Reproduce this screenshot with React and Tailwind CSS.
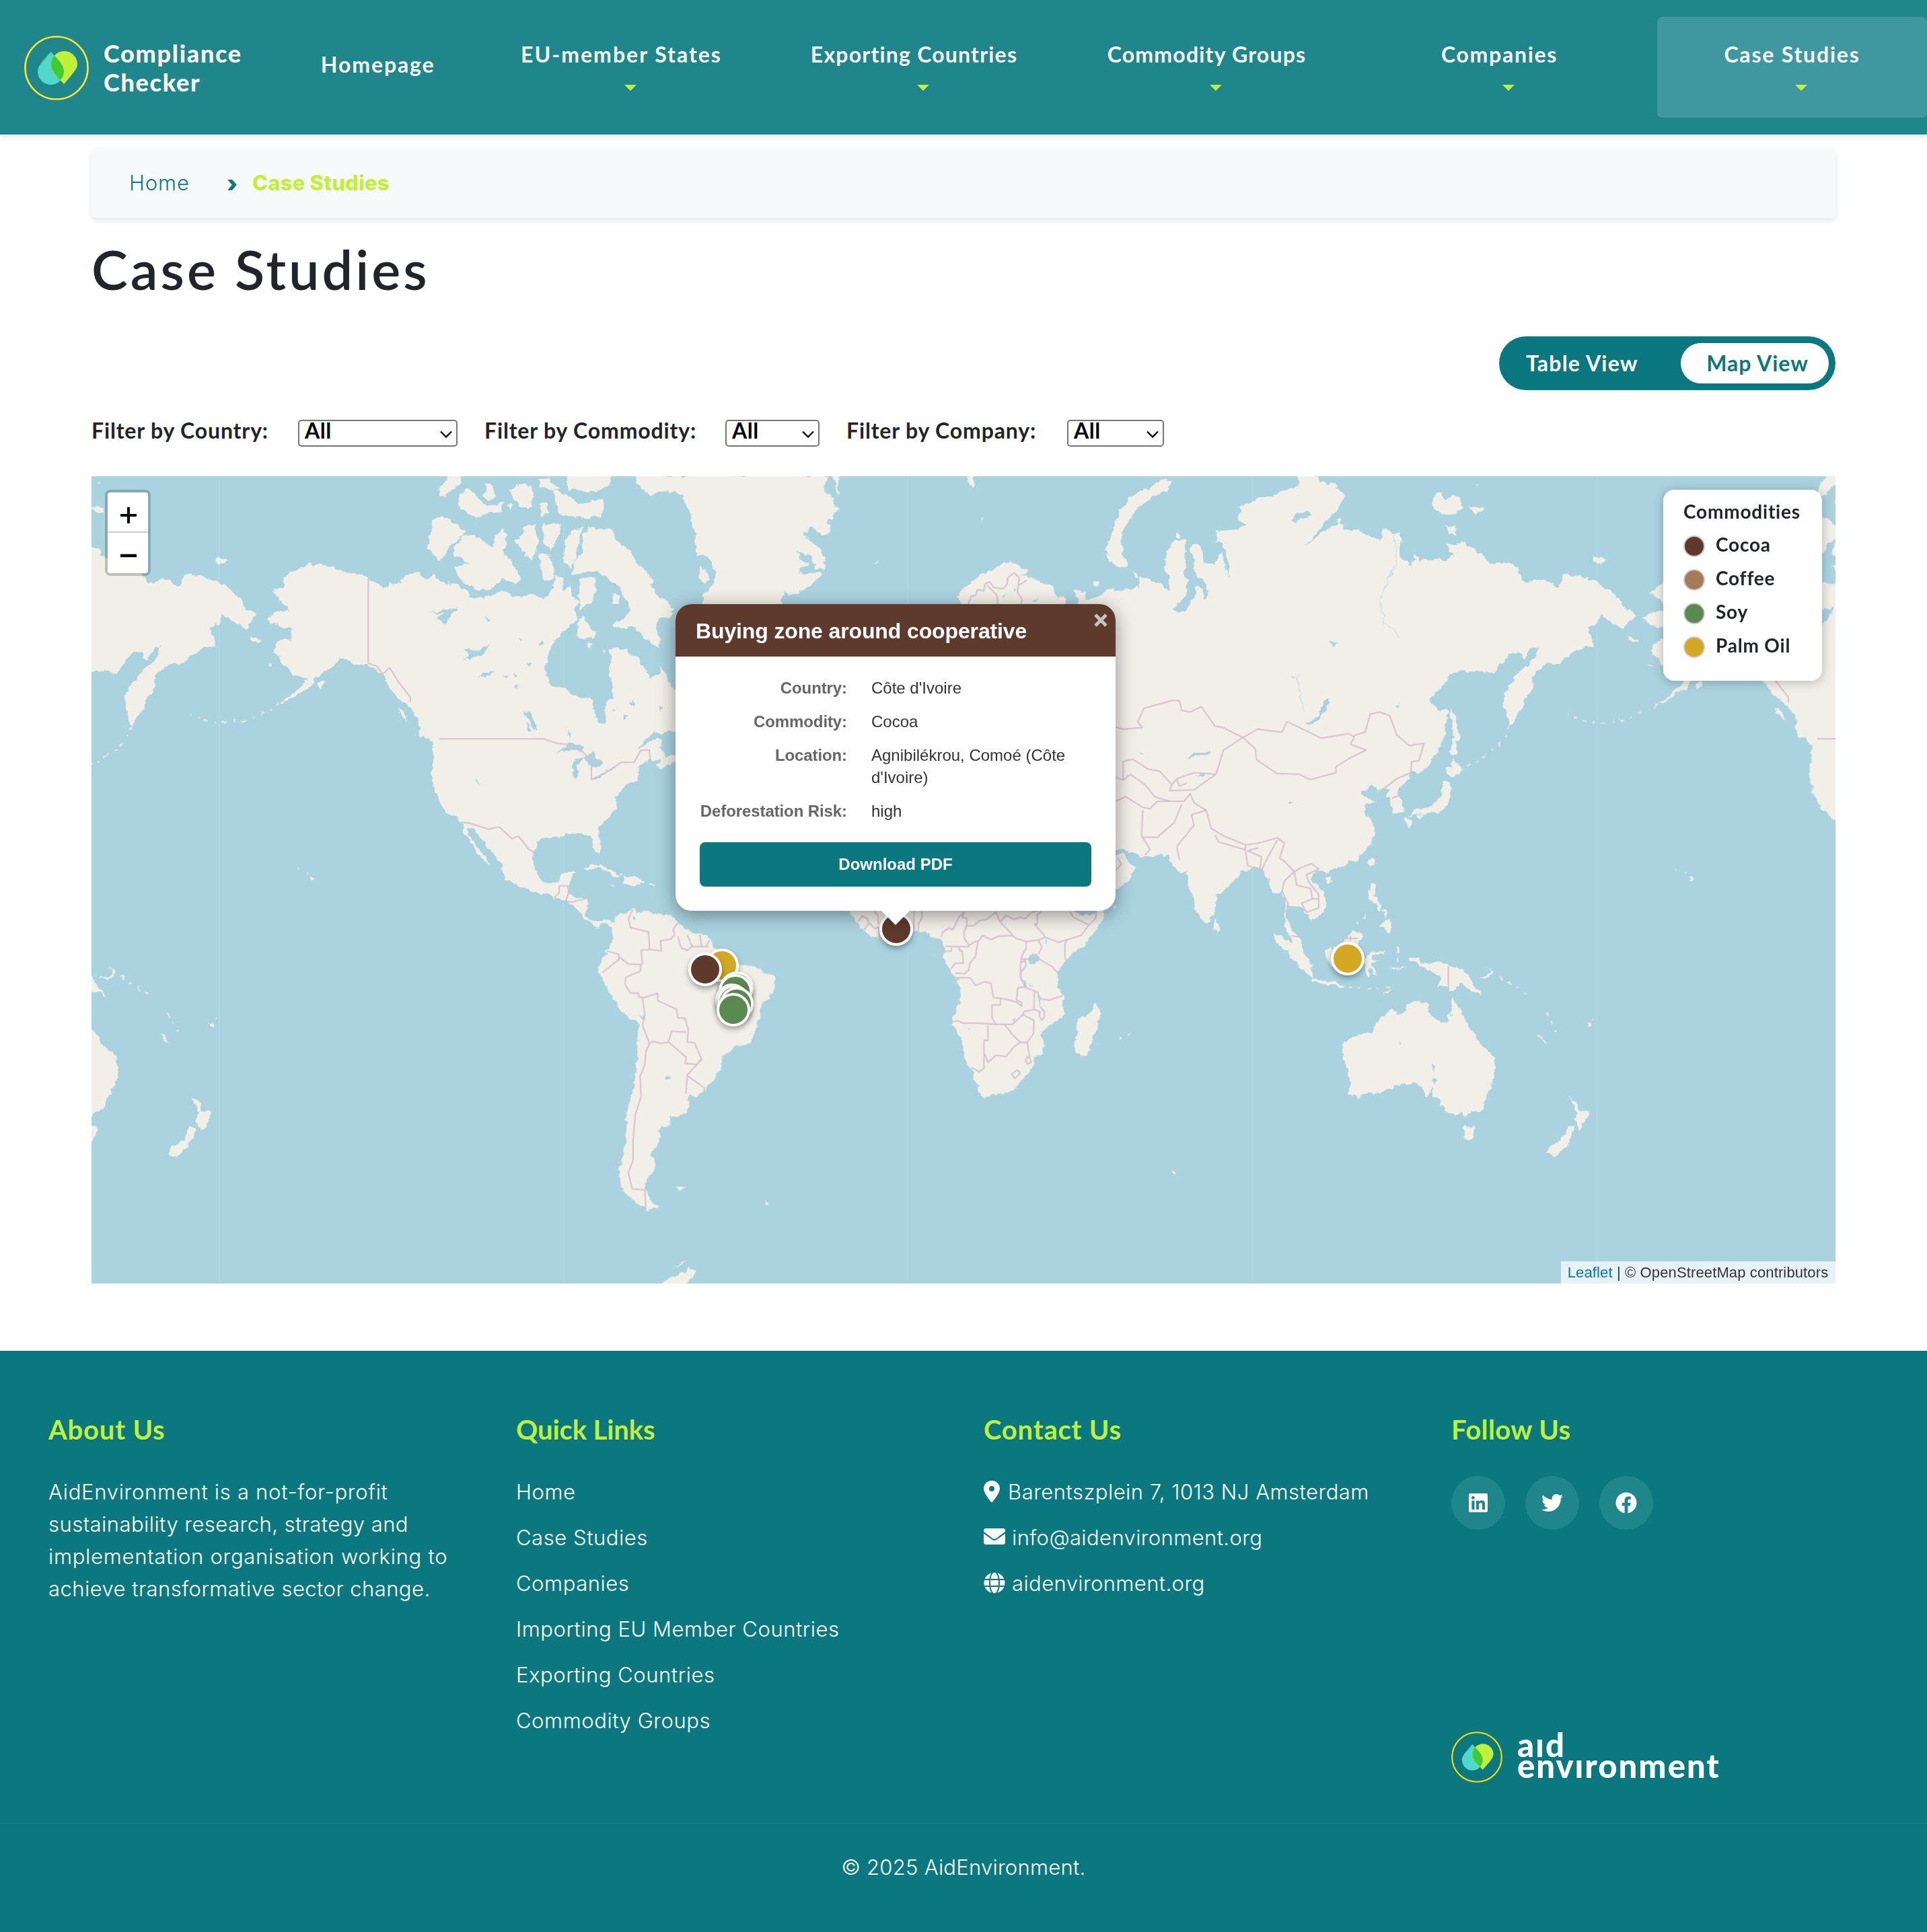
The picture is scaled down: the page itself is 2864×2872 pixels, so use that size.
import React from "react";
import { FaEnvelope, FaGlobe, FaLinkedin, FaTwitter, FaFacebook } from "react-icons/fa";
import { FaLocationDot } from "react-icons/fa6";

const NAV = [
  ["EU-member States", "tracking-[2px]"],
  ["Exporting Countries", "tracking-[1.2px]"],
  ["Commodity Groups", "tracking-[1.2px]"],
  ["Companies", "tracking-[1.7px]"],
  ["Case Studies", "tracking-[1.8px]"],
];
const QUICK_LINKS = [
  "Home",
  "Case Studies",
  "Companies",
  "Importing EU Member Countries",
  "Exporting Countries",
  "Commodity Groups",
];
const LEGEND = [
  ["Cocoa", "#5d3a2b"],
  ["Coffee", "#a67b5b"],
  ["Soy", "#5a8a50"],
  ["Palm Oil", "#d4a823"],
];
const MARKERS = [
  [1332, 1381, "#5d3a2b"],
  [2003, 1425, "#d4a823"],
  [1072.5, 1434.5, "#d4a823"],
  [1048.3, 1440.5, "#5d3a2b"],
  [1095, 1469, "#5a8a50"],
  [1092.5, 1473, "#5a8a50"],
  [1088, 1487, "#5a8a50"],
  [1091, 1489, "#5a8a50"],
  [1094.5, 1491.5, "#5a8a50"],
  [1090.3, 1501, "#5a8a50"],
];
const ROWS = [
  ["Country:", "Côte d'Ivoire"],
  ["Commodity:", "Cocoa"],
  ["Location:", "Agnibilékrou, Comoé (Côte d'Ivoire)"],
  ["Deforestation Risk:", "high"],
];

/* Each sheet of the map has its own drawing scale; t places it on the world canvas. */
const NORTH_AMERICA = {
  t: "translate(120 600) scale(0.63776 0.5102)",
  land: [
    "M532,458 545,470 565,466 590,480 610,488 640,497 655,495 670,510 690,525 708,537 720,522 740,530 750,508 770,495 788,485 795,503 805,510 822,495 830,512 850,520 880,530 900,545 905,565 935,566 960,556 985,543 1010,560 1035,562 1055,552 1075,568 1090,560 1100,540 1105,500 1118,510 1128,545 1140,530 1145,560 1160,575 1150,600 1160,625 1140,650 1110,685 1090,715 1083,760 1085,790 1098,822 1125,828 1150,850 1193,865 1197,905 1217,937 1225,925 1220,880 1240,860 1240,820 1228,795 1236,750 1232,712 1255,715 1270,715 1295,735 1310,770 1328,800 1345,790 1352,765 1365,790 1380,830 1395,860 1400,930 1386,955 1335,960 1310,985 1300,1005 1320,990 1345,975 1355,985 1350,1010 1365,1030 1386,1020 1396,1035 1350,1065 1340,1055 1350,1040 1328,1035 1300,1060 1297,1095 1270,1110 1255,1135 1245,1150 1250,1180 1225,1210 1205,1240 1212,1275 1210,1315 1200,1305 1188,1260 1165,1252 1130,1250 1115,1265 1085,1262 1065,1280 1055,1310 1058,1355 1072,1390 1090,1398 1115,1395 1120,1370 1150,1363 1142,1395 1137,1420 1150,1438 1183,1440 1180,1475 1175,1490 1190,1510 1215,1506 1232,1503 1240,1518 1225,1515 1205,1525 1190,1518 1170,1497 1160,1475 1145,1460 1130,1450 1103,1440 1090,1430 1060,1425 1020,1405 990,1385 985,1355 960,1310 940,1280 915,1240 903,1232 905,1255 925,1295 945,1325 950,1345 935,1325 918,1300 905,1270 893,1245 885,1220 868,1202 850,1190 835,1155 822,1120 818,1080 822,1020 820,985 795,955 785,940 790,925 770,890 745,865 720,830 705,795 690,775 668,758 640,762 620,750 605,742 588,765 565,785 545,800 530,830 500,850 480,868 465,872 500,840 522,815 527,800 495,795 485,775 470,760 465,740 447,725 455,700 475,685 490,690 492,655 470,655 445,640 432,628 445,612 465,600 485,605 470,575 445,548 470,535 480,500 500,485 520,475Z",
    "M1205,365 1240,370 1250,400 1275,425 1300,470 1325,500 1330,535 1350,565 1378,600 1375,630 1355,620 1340,640 1350,690 1350,710 1320,690 1290,650 1265,655 1240,650 1260,630 1285,600 1270,570 1255,535 1225,505 1200,490 1165,490 1145,500 1150,460 1170,440 1168,410 1170,380 1185,362Z",
    "M1145,370 1170,360 1160,400 1155,450 1140,480 1125,450 1130,400Z",
    "M870,415 890,385 915,380 935,400 960,420 965,390 985,362 995,380 985,430 1005,460 1025,510 1015,530 985,510 960,540 925,545 890,520 870,475 905,465 870,440Z",
    "M818,338 845,330 870,345 898,375 880,395 860,410 850,435 835,460 820,435 808,425 815,380Z",
    "M880,280 900,245 920,260 935,290 950,300 985,285 980,310 945,318 920,335 900,315 880,300Z",
    "M862,205 890,205 885,235 860,250 850,270 835,268 840,240Z",
    "M945,230 958,235 970,270 955,285 940,275Z",
    "M1000,250 1025,232 1050,240 1055,275 1045,310 1025,300 1010,280Z",
    "M1070,290 1088,290 1090,320 1075,325ZM993,290 1002,290 1000,308Z",
    "M1100,250 1130,265 1160,290 1215,278 1220,300 1215,330 1150,330 1115,322 1105,290Z",
    "M1130,205 1235,205 1230,240 1200,258 1160,250 1135,245Z",
    "M1065,220 1090,220 1115,250 1070,245Z",
    "M1012,400 1035,365 1060,350 1065,400 1062,430 1050,455 1030,430Z",
    "M1080,350 1120,350 1115,380 1095,430 1075,400Z",
    "M1070,440 1090,440 1105,490 1100,510 1080,515 1068,480Z",
    "M1165,510 1198,508 1200,545 1185,580 1165,605 1160,570Z",
    "M1158,635 1168,615 1185,650 1205,665 1195,685 1155,680Z",
    "M1240,555 1258,560 1250,582 1240,580ZM1178,700 1195,695 1188,712ZM1212,716 1222,722 1216,735Z",
    "M395,680 415,685 420,694 400,692Z",
    "M785,945 800,950 830,985 832,1005 820,990 790,965Z",
    "M740,885 752,895 760,925 745,905Z",
    "M550,815 565,808 568,820 555,832Z",
    "M436,762 448,760 450,768Z",
    "M1172,1355 1195,1342 1220,1350 1262,1375 1240,1378 1225,1362 1205,1352 1180,1358Z",
    "M1265,1382 1290,1382 1317,1395 1300,1400 1285,1405 1262,1395Z",
    "M1230,1398 1247,1400 1240,1404ZM1325,1397 1340,1398 1338,1403 1326,1402Z",
    "M536,1378 547,1386 538,1393ZM502,1353 508,1353 508,1358ZM524,1364 532,1367 526,1370Z",
  ],
  isles: "M500,845 450,888 400,918 340,932 290,925 255,905",
  water: [
    "M1108,1016 1145,985 1172,1000 1165,1015 1140,1010Z",
    "M1150,1035 1172,1028 1160,1050 1155,1095 1145,1085Z",
    "M1170,1030 1190,1018 1215,1045 1200,1062 1180,1045Z",
    "M1188,1098 1220,1075 1222,1082 1192,1100ZM1222,1068 1245,1058 1245,1064 1224,1070Z",
    "M1030,895 1045,895 1067,955 1058,952 1040,912ZM1036,930 1042,930 1052,955 1046,955Z",
    "M890,747 905,735 895,712 925,720 955,702 940,725 905,747Z",
    "M812,605 840,605 875,592 868,612 860,622 848,645 832,625 845,612Z",
    "M925,800 940,785 968,778 945,795ZM920,1096 930,1104 926,1109Z",
    "M1020,688 1030,686 1024,696ZM1070,690 1078,700 1070,702ZM985,790 998,788 992,800ZM1040,755 1052,755 1046,765Z",
    "M1010,820 1022,815 1014,835ZM1005,790 1015,795 1008,803ZM945,620 955,625 948,635ZM1345,882 1360,882 1352,895Z",
    "M1280,870 1290,865 1285,880ZM1265,905 1275,910 1268,920ZM1240,890 1248,893 1242,902ZM1135,955 1143,958 1138,972Z",
  ],
  borders:
    "M670,510V757L690,765 703,788 720,770 740,810 768,855 768,870M835,977H1080L1110,990 1135,993 1170,1015 1190,1040 1190,1095 1220,1078 1260,1045 1290,1045 1305,1010 1325,1010 1327,1040M885,1220 905,1222 950,1240 975,1233 1005,1268 1020,1260 1045,1300 1060,1307M1103,1440 1115,1425 1115,1405 1135,1405 1137,1425 1130,1450 1145,1452 1183,1440",
};

const ARCTIC = {
  t: "translate(900 700) scale(0.5102 0.33333)",
  land: [
    "M85,20 100,60 108,85 135,110 155,92 180,85 205,95 225,125 240,170 250,220 262,290 265,345 265,385 285,370 305,395 318,440 318,500 300,530 285,560 282,620 505,620 515,570 518,530 530,553 560,540 600,505 635,458 600,452 565,460 560,440 595,420 565,390 562,358 600,380 610,435 640,440 635,380 615,330 575,285 600,250 630,285 655,270 655,240 645,225 668,210 665,190 685,175 665,150 662,110 640,90 635,60 650,20Z",
    "M665,20H680L675,110Z",
    "M270,425 300,450 300,490 285,500 272,480Z",
    "M780,415 792,402 788,415ZM1090,208 1097,212 1092,220Z",
    "M1048,20H1075L1070,70 1055,50Z",
    "M0,320 15,315 30,330 50,370 80,380 85,420 110,430 125,460 135,500 120,520 145,560 180,575 200,620 190,640H100L75,560 60,520 30,470 0,430Z",
    "M0,262 20,270 30,310 0,310ZM0,40 14,45 8,75 0,78ZM22,550 42,548 38,590 22,590Z",
    "M1025,560 1045,520 1060,505 1095,460 1130,435 1165,405 1195,410 1225,445 1215,465 1245,475 1275,500 1300,520 1320,555 1340,575 1340,620H1040Z",
    "M1365,530 1398,535 1395,560 1400,570 1385,595 1380,620H1370L1380,570Z",
    "M1415,580 1440,560 1465,525 1480,520 1480,545 1510,545 1545,520 1600,515V640H1420Z",
    "M1420,490 1440,490 1435,520 1418,515Z",
  ],
  water: ["M1155,555 1165,550 1160,565ZM1190,525 1196,530 1190,540ZM1240,575 1258,570 1248,582Z"],
  borders:
    "M1055,600 1065,560 1078,555 1083,530 1102,535 1105,505 1118,495 1132,520 1158,525 1170,505 1172,475 1190,455 1205,475 1200,540 1213,572 1210,600M1112,510 1140,555 1143,600M1203,510 1228,487",
};

const ASIA = {
  t: "translate(1600 700) scale(0.72704 0.44643)",
  land: [
    "M-50,480 20,430 60,405 90,400 105,390 115,400 130,398 128,350 160,365 185,395 192,408 190,345 178,330 185,270 200,230 222,235 225,300 220,340 228,365 220,420 195,460 220,472 240,420 245,385 258,395 262,430 270,410 265,380 260,360 240,340 240,290 230,260 245,240 255,260 260,300 280,315 295,270 310,350 310,310 305,265 285,235 288,200 330,195 345,180 330,155 335,120 370,95 400,80 430,65 455,45 450,10 490,10 495,40 530,45 545,80 540,120 515,155 500,190 465,250 495,215 520,185 545,175 550,195 580,200 600,215 625,235 625,195 650,205 660,205 665,240 660,280 683,318 693,275 700,300 735,290 750,300 770,285 755,245 790,240 815,260 825,275 845,310 880,305 905,325 908,350 920,375 955,360 985,385 995,345 1030,350 1060,365 1090,400 1110,430 1120,460 1142,475 1130,500 1120,530 1090,500 1070,475 1065,510 1045,520 1058,585 1040,580 1010,610 985,645 965,640 945,660 930,690 935,720 920,750 905,800 885,850 873,790 875,740 900,680 935,625 945,585 930,590 915,630 905,605 885,610 865,650 855,675 830,665 770,670 750,710 720,765 735,790 760,800 755,870 740,930 720,985 700,1008 685,1000 680,1030 660,1055 655,1075 665,1100 668,1130 645,1145 642,1090 632,1085 640,1060 625,1060 615,1070 605,1045 580,1075 590,1085 613,1100 590,1115 595,1150 610,1185 605,1230 585,1280 555,1310 525,1325 510,1345 500,1330 485,1340 480,1360 505,1400 510,1440 505,1470 480,1500 475,1475 455,1450 440,1455 432,1440 430,1490 440,1530 456,1550 463,1580 468,1625 455,1612 442,1575 438,1550 425,1520 428,1450 420,1400 400,1408 395,1370 380,1330 365,1320 340,1330 330,1350 310,1385 285,1410 282,1480 262,1508 245,1470 230,1400 225,1330 210,1340 195,1310 190,1280 140,1280 110,1275 95,1255 80,1260 -50,1260Z",
    "M50,1290 95,1275 105,1300 122,1320 110,1360 80,1392 50,1400Z",
    "M282,1490 295,1520 290,1535 280,1530Z",
    "M60,260 75,200 85,140 110,85 150,55 180,28 195,35 190,65 150,90 125,125 105,170 90,230 95,280 105,320 85,320 65,295Z",
    "M112,330 122,340 128,358 118,350ZM33,370 45,365 47,380 36,390ZM-5,400 15,402 20,425 8,440Z",
    "M768,785 775,830 783,895 775,900 778,945 765,945 768,880 763,820Z",
    "M768,960 790,985 790,1000 775,1020 762,1015 755,990 767,985Z",
    "M750,1030 762,1035 765,1075 755,1115 745,1135 720,1140 695,1145 680,1150 690,1130 715,1125 730,1105 745,1080Z",
    "M675,1155 688,1165 680,1192 672,1175ZM695,1148 710,1145 705,1160Z",
    "M600,1285 610,1290 605,1320 596,1305ZM507,1355 520,1350 522,1365 512,1375Z",
    "M600,1375 612,1378 610,1415 622,1445 600,1430 595,1405Z",
    "M730,80 745,70 752,100 765,78 785,95 790,120 770,145 750,145 730,130Z",
    "M800,115 830,125 830,140 815,145ZM755,180 775,190 775,215 760,205Z",
    "M1055,295 1070,288 1083,298 1065,312ZM1128,552 1150,562 1140,570Z",
    "M530,160 542,160 538,180ZM205,205 212,205 212,222 206,222ZM815,42 824,42 820,48Z",
  ],
  isles: "M885,850 870,905 840,940 820,965 793,985",
  water: [
    "M512,752 517,775 500,815 475,848 468,840 495,815Z",
    "M230,965 235,938 275,936 270,945 240,948Z",
    "M435,1102 443,1102 440,1112ZM240,1012 268,1010 262,1020ZM127,940 135,940 132,948Z",
    "M445,150 470,130 480,150 460,155 448,180 440,165Z",
    "M515,565 535,572 525,585ZM655,780 663,775 657,792Z",
  ],
  borders:
    "M80,853 95,860 135,855 125,835 138,790 195,765 210,765 215,798 232,803 255,785 283,850 300,855 340,888 300,930 290,985 285,1010 240,1005 205,1025 195,1045 170,1000 145,992 115,960 95,968 95,1030M340,888 370,860 420,870 430,835 450,850 500,890 555,875 568,885 560,910 592,930 560,955 530,985 530,1005 478,1028 455,1010 410,1008 368,962 365,925 340,888M568,880 590,870 600,810 620,803 640,815 655,880 680,915 710,907 700,965 685,968 683,1005 655,1025 628,1058M645,1090 660,1080M80,1020 95,1030 110,1010 140,1045 160,1085 190,1100M195,1045 190,1065 240,1062 285,1010M205,1025 210,1050 225,1040M80,1100 100,1085 135,1120 150,1125 165,1100 195,1100 220,1100 232,1075 240,1105 265,1130 275,1190 300,1215 345,1245 370,1240 410,1222 425,1240 415,1290M135,1130 133,1215 150,1260 140,1280M133,1220 165,1220 200,1170 215,1110M265,1130 235,1145 240,1180 205,1250 210,1295M283,1212 290,1235 345,1262 345,1245M345,1262 350,1315 375,1325 378,1285 350,1265 372,1255M378,1330 390,1290 410,1230M415,1290 425,1300 445,1335 425,1365 420,1400 432,1440 428,1490M445,1335 450,1380 478,1390 482,1425 460,1440 470,1470 495,1455 495,1425 482,1425M445,1335 460,1320 480,1308 495,1325 470,1345 475,1370 495,1410 495,1425M440,1548 455,1552M80,1330 92,1310 85,1290",
  rivers: "M650,205 652,310 635,370 620,430 628,500 645,525 660,555M450,690 458,740 465,800M440,690 455,680",
};

const OCEANIA = {
  t: "translate(1600 1300) scale(0.72704 0.39541)",
  land: [
    "M770,458 778,490 790,520 798,570 815,600 825,640 850,670 857,730 850,790 838,830 828,888 812,888 798,910 788,895 778,905 752,890 745,855 730,830 728,805 715,835 708,800 685,783 650,795 625,820 595,822 575,843 557,828 560,780 548,700 545,640 560,610 605,590 618,545 645,505 655,525 670,520 675,490 695,475 725,485 715,520 735,545 755,562 765,520Z",
    "M788,948 815,950 812,985 802,1000 792,980Z",
    "M1008,832 1022,860 1030,885 1050,890 1040,925 1028,962 1022,930 1015,920 1025,900Z",
    "M1005,945 1018,955 1008,1005 995,1030 980,1062 960,1050 965,1030 990,1000Z",
    "M680,312 700,310 705,340 735,325 775,345 800,375 810,410 833,457 805,435 785,405 775,430 760,435 755,415 735,425 745,400 740,375 715,355 700,350 700,335 680,320Z",
    "M818,388 840,378 848,362 838,345 852,365 842,388Z",
    "M400,222 425,240 450,275 465,300 483,340 484,385 465,370 450,340 430,290 405,245Z",
    "M484,390 515,398 550,415 548,425 510,412 484,402ZM622,455 648,430 640,445Z",
    "M510,280 535,275 545,250 565,210 585,225 575,250 578,290 560,350 540,360 520,340 510,310Z",
    "M590,320 600,292 628,292 634,282 630,300 604,302 600,318 614,322 602,335 618,380 606,372 598,348 596,385 590,380Z",
    "M655,270 660,270 660,300 655,300ZM645,350 675,350 675,355 645,355Z",
    "M618,185 640,165 645,200 636,220 628,200ZM612,105 622,110 622,135 614,128ZM625,130 634,140 630,165Z",
    "M940,600 945,602 962,630 958,630ZM1043,558 1052,558 1050,572 1044,570ZM1055,545 1062,540 1060,550Z",
    "M195,1110 208,1118 198,1130ZM88,610 94,612 90,620ZM1252,10 1260,18 1255,22Z",
  ],
  isles: "M555,428 600,428 650,425M865,385 895,420 925,458M590,150 572,188M960,520 972,560 980,592M655,310 658,330",
  water: ["M726,718 733,722 730,745ZM727,760 734,765 732,790ZM660,630 666,635 661,640Z"],
  borders: "M760,345V435M545,240H575M560,230V250",
};

const AFRICA = {
  t: "translate(1250 1340) scale(0.33333)",
  land: [
    "M30,35 50,65 75,90 85,115 105,125 130,150 165,165 180,160 220,140 300,132 380,132 400,165 445,162 455,180 465,205 450,255 475,290 495,310 515,345 525,380 535,430 530,455 510,480 498,520 500,550 520,585 545,630 550,690 560,730 580,745 595,780 610,820 610,850 635,875 680,860 720,858 760,848 800,815 830,770 855,740 860,710 858,695 900,675 905,640 890,590 930,550 985,515 995,490 988,420 970,380 968,340 975,300 1000,270 1050,220 1100,180 1130,140 1160,90 1170,42 1165,-40 0,-40Z",
    "M1140,450 1150,475 1160,505 1150,520 1140,560 1120,620 1100,680 1070,690 1045,675 1040,620 1060,590 1050,540 1060,520 1090,512 1115,490 1130,470Z",
    "M1210,22 1225,22 1222,30 1212,30ZM1240,608 1250,608 1246,616ZM1278,592 1286,590 1282,600ZM405,235 413,235 410,242Z",
  ],
  water: [
    "M1038,35 1138,35 1130,48 1060,62 1045,50Z",
    "M840,240 880,235 880,265 865,285 840,280Z",
    "M797,290 803,340 830,388 815,382 800,345Z",
    "M876,405 890,425 892,465 898,487 885,460Z",
    "M765,545 775,532 790,525 778,538ZM568,565 582,562 580,570ZM838,368 856,378 850,384ZM908,160 920,190 912,188Z",
  ],
  borders:
    "M75,90 95,65 115,75 125,95 105,125M125,95 150,120 170,115 170,165M150,42 165,65 165,100M325,132V42M345,132V100L360,75V42M445,160 455,135 480,120 500,125 525,70 550,45M550,45 540,70 560,75 560,110 548,135 550,165 570,195 600,178H612M560,110 590,108 620,85 650,80 690,48 710,92 765,150M710,92 735,62 770,80 800,70 820,78 850,48 875,42M612,178 630,152 670,170 700,155 765,152 780,165 825,178 880,172 910,160M895,42 875,60 875,100 862,100 905,150 910,160 970,182 1010,170 1070,152 1105,105 1135,75 1138,42M1020,45 1035,70 1105,105M1010,170 998,190V250L1008,268M880,172 895,205 880,235M805,258 880,255 940,290 968,320M825,178V210L805,245 800,290 803,345 828,385 875,405 890,435 930,440 988,420M465,200 570,202 572,190M462,222H492V202M525,205 530,220 540,222 545,275 510,275 490,300M610,178 600,245 575,275 570,305 550,322 510,320M512,340H575L600,375 640,358 668,365 680,430 710,432 750,440 785,450 805,468V450L782,440 788,385 825,380M710,432V462H673V520L690,548M500,535 520,532 545,543H610L690,548H765L810,505 860,530 858,590 830,628H800L765,595 730,550M810,505 815,492 860,482 862,400M860,482 885,490V515L897,530 907,515 905,490 890,470M655,552V620H637V745L615,760 582,740M640,680 655,718 690,685 735,692 770,650 800,628M830,628 842,700 848,718 830,725 822,710 830,692 842,700M760,770 785,752 800,765 775,790ZM800,275 820,262 825,285 800,320",
};

const SOUTH_AMERICA = {
  t: "translate(120 1240) scale(0.70153 0.43367)",
  land: [
    "M1075,300 1090,308 1098,318 1103,297 1118,308 1130,300 1140,275 1160,265 1170,255 1178,268 1200,262 1215,275 1240,278 1255,280 1262,300 1280,320 1300,340 1320,345 1335,360 1340,385 1350,400 1395,445 1425,455 1450,475 1468,490 1470,520 1455,560 1438,600 1435,650 1425,690 1415,720 1390,728 1360,760 1357,800 1335,850 1320,885 1305,903 1285,890 1290,930 1280,962 1250,970 1245,1005 1225,1000 1228,1035 1220,1075 1205,1095 1218,1125 1212,1160 1192,1200 1205,1250 1222,1278 1205,1290 1185,1275 1165,1250 1145,1210 1140,1150 1148,1100 1155,1040 1157,950 1170,880 1178,800 1180,720 1183,650 1145,610 1130,570 1110,510 1095,475 1100,440 1115,400 1127,360 1123,318 1110,300 1098,322 1078,305Z",
    "M1258,1210 1282,1206 1270,1222ZM1445,1258 1450,1258 1462,1280 1455,1272Z",
    "M1230,1545 1250,1520 1290,1490 1305,1498 1280,1545ZM1253,1488 1282,1460 1275,1475Z",
  ],
  water: ["M1168,280 1175,280 1175,298 1170,296ZM1240,830 1248,835 1244,845ZM1187,620 1195,628 1190,636Z"],
  borders:
    "M1170,258 1160,290 1165,320 1203,335 1205,395 1187,398 1190,445M1205,395 1230,400 1228,365 1250,360 1258,345 1255,325 1265,305M1265,350 1272,390 1285,398 1295,385 1285,345M1295,385H1330M1312,345 1315,385M1332,362 1325,385M1115,400 1140,412V430L1120,455 1105,475M1140,420 1160,445 1187,447 1185,470 1155,490 1153,515 1165,545H1182V558L1195,560 1222,545V570L1262,600 1265,630H1280L1287,670 1285,712 1300,715 1315,770 1305,790 1280,785 1283,765 1245,712 1230,718 1212,710 1205,718M1245,712 1252,675 1283,678M1190,560 1195,620 1190,655 1205,718 1197,745 1195,790 1185,830 1187,900 1175,960 1170,1050V1120L1160,1160 1168,1215 1195,1220 1197,1280M1317,770 1285,825 1282,890M1287,830 1322,870 1320,885",
};

function Land({ s }) {
  return (
    <g transform={s.t}>
      {s.land.map((d, i) => (
        <path key={i} d={d} fill="#f2efe9" />
      ))}
      {s.isles && (
        <path d={s.isles} fill="none" stroke="#f2efe9" strokeOpacity="0.8" strokeWidth="2.5" strokeDasharray="6 9 3 10" vectorEffect="non-scaling-stroke" />
      )}
      {s.water.map((d, i) => (
        <path key={i} d={d} fill="#aad3df" />
      ))}
      {s.rivers && <path d={s.rivers} fill="none" stroke="#cbe0e3" strokeWidth="1.5" vectorEffect="non-scaling-stroke" />}
    </g>
  );
}

function Borders({ s }) {
  return (
    <g transform={s.t}>
      <path d={s.borders} fill="none" stroke="#d5c0ce" strokeWidth="2" strokeLinejoin="round" vectorEffect="non-scaling-stroke" />
    </g>
  );
}

function WorldMap() {
  return (
    <svg viewBox="136 708 2592 1200" className="block h-[1200px] w-[2592px]">
      <defs>
        <filter id="coast" filterUnits="userSpaceOnUse" x="136" y="708" width="2592" height="1200">
          <feTurbulence type="fractalNoise" baseFrequency="0.09" numOctaves="3" seed="4" result="n" />
          <feDisplacementMap in="SourceGraphic" in2="n" scale="10" xChannelSelector="R" yChannelSelector="G" />
        </filter>
        <g id="west">
          <Land s={NORTH_AMERICA} />
        </g>
        <g id="east">
          <Land s={ASIA} />
          <Land s={OCEANIA} />
        </g>
      </defs>
      <rect x="136" y="708" width="2592" height="1200" fill="#aad3df" />
      <g filter="url(#coast)">
        <use href="#west" />
        <use href="#west" x="2048" />
        <Land s={ARCTIC} />
        <Land s={SOUTH_AMERICA} />
        <Land s={AFRICA} />
        <use href="#east" />
        <use href="#east" x="-2048" />
      </g>
      <g id="lines-west">
        <Borders s={NORTH_AMERICA} />
      </g>
      <use href="#lines-west" x="2048" />
      <Borders s={ARCTIC} />
      <Borders s={SOUTH_AMERICA} />
      <Borders s={AFRICA} />
      <Borders s={ASIA} />
      <Borders s={OCEANIA} />
      <path
        d="M325.5,708V1908M837.5,708V1908M1349.5,708V1908M1861.5,708V1908M2373.5,708V1908"
        stroke="#ffffff"
        strokeOpacity="0.14"
        strokeWidth="1"
      />
    </svg>
  );
}

function Emblem({ className, ring, width }) {
  return (
    <svg viewBox="0 0 96 96" className={className}>
      <circle cx="48" cy="48" r="46.5" fill="none" stroke={ring} strokeWidth={width} />
      <path d="M39.5,24 L31,34 C24,42 20,47 20,53.5 A19.5,19.5 0 0 0 59,53.5 C59,47 56,42 49,34 Z" fill="#4fd8cb" />
      <path d="M59,72 L67.500,62 C75,53 79,48 79,42.500 A19.5,19.5 0 0 0 40,42.500 C40,49 43,54 49,61 Z" fill="#c0f03c" />
      <path d="M45.200,29.500 C41.800,33 40,37.500 40,42.500 C40,49 43,54 49,61 L53.600,66.200 C57.200,62.500 59,58 59,53.500 C59,47 56,42 49,34 Z" fill="#3fcb33" />
    </svg>
  );
}

function Select({ className }) {
  return (
    <div className={`flex h-[40px] items-center justify-between rounded-[5px] border-2 border-[#767676] bg-white pr-[5px] pl-[8px] ${className}`}>
      <span className="-mt-[9px] font-['Lato'] text-[32px] leading-[36px] font-bold tracking-[0.6px] text-black">All</span>
      <svg viewBox="0 0 20 12" className="mt-[3px] h-[12px] w-[20px]">
        <path d="M2 1.500 L10 9.500 L18 1.500" fill="none" stroke="#000" strokeWidth="2.300" />
      </svg>
    </div>
  );
}

function Popup() {
  return (
    <div className="absolute top-[190px] left-[868px] w-[654px]">
      <div className="relative h-[456px] overflow-hidden rounded-[24px] bg-white font-['Liberation_Sans'] shadow-[0_6px_28px_rgba(0,0,0,0.4)]">
        <div className="flex h-[78px] items-center bg-[#5d3a2b] pt-[2px] pl-[30px] text-[32px] leading-[40px] font-bold tracking-[-0.13px] text-white">
          Buying zone around cooperative
        </div>
        <svg viewBox="0 0 20 20" className="absolute top-[14px] right-[12px] h-[20px] w-[20px]">
          <path d="M2 2 L18 18 M18 2 L2 18" stroke="#c9c4c1" strokeWidth="5" />
        </svg>
        <div className="flex flex-col gap-[17px] px-[36px] pt-[30px] text-[24px] leading-[33px]">
          {ROWS.map(([k, v]) => (
            <div key={k} className="flex gap-[36px]">
              <div className="w-[219px] text-right font-bold tracking-[-0.1px] whitespace-nowrap text-[#666]">{k}</div>
              <div className="w-[310px] text-[#333]">{v}</div>
            </div>
          ))}
        </div>
        <div className="mx-[36px] mt-[30px] flex h-[66px] items-center justify-center rounded-[8px] bg-[#0b7880] text-[24px] font-bold text-white">
          Download PDF
        </div>
      </div>
      <svg viewBox="0 0 42 21" className="relative mx-auto block h-[21px] w-[42px]">
        <path d="M0 0 H42 L21 21 Z" fill="#fff" />
      </svg>
    </div>
  );
}

export default function App() {
  return (
    <div className="h-[2872px] w-[2864px] overflow-hidden bg-white">
      <header className="relative flex h-[200px] bg-[#1f868c] font-['Lato'] text-[#f8f9fa] shadow-[0_4px_8px_rgba(0,0,0,0.1)]">
        <div className="flex w-[401px] pt-[53px] pl-[36px]">
          <Emblem className="h-[96px] w-[96px]" ring="#ffe62e" width="2.6" />
          <div className="mt-[5px] ml-[22px] text-[36px] leading-[43px] font-black tracking-[1.7px]">
            Compliance
            <br />
            Checker
          </div>
        </div>
        <div className="w-[323px] pt-[76px] text-center text-[32px] leading-[40px] font-bold tracking-[1.9px]">Homepage</div>
        <nav className="flex gap-[34px] pt-[25px]">
          {NAV.map(([n, tracking], i) => (
            <div
              key={n}
              className={`flex h-[150px] w-[401px] flex-col items-center rounded-[8px] pt-[36px] text-[32px] leading-[40px] font-bold whitespace-nowrap ${tracking} ${i === 4 ? "bg-[#3f989f]" : ""}`}
            >
              {n}
              <svg viewBox="0 0 18 9" className="mt-[25px] ml-[27px] h-[9px] w-[18px]">
                <path d="M0 0 H18 L9 9 Z" fill="#c0f03c" />
              </svg>
            </div>
          ))}
        </nav>
      </header>

      <main className="px-[136px] pt-[20px] font-['Lato']">
        <div className="flex h-[104px] items-center rounded-[8px] bg-[#f8f9fb] pl-[56px] font-['Inter'] text-[31px] shadow-[0_4px_8px_rgba(0,0,0,0.1)]">
          <span className="w-[145px] font-light tracking-[0.9px] text-[#0b7880]">Home</span>
          <span className="w-[38px] text-[34px] font-black text-[#0b7880]">›</span>
          <span className="font-extrabold tracking-[0.2px] text-[#c0f03c]">Case Studies</span>
        </div>
        <h1 className="mt-[28px] h-[96px] text-[81px] leading-[96px] font-semibold tracking-[4px] text-[#212529]">Case Studies</h1>
        <div className="mt-[52px] flex justify-end">
          <div className="flex h-[80px] w-[500px] items-center justify-between rounded-full bg-[#0b7880] pr-[10px] pl-[40px] text-[32px] font-bold text-white">
            <span className="tracking-[1.2px]">Table View</span>
            <span className="flex h-[60px] w-[220px] items-center justify-center rounded-full bg-white pl-[8px] tracking-[1px] text-[#0b7880]">
              Map View
            </span>
          </div>
        </div>
        <div className="mt-[44px] flex h-[39px] text-[32px] leading-[32px] font-bold tracking-[0.85px] whitespace-nowrap text-[#212529]">
          <span className="w-[307px]">Filter by Country:</span>
          <Select className="w-[237px]" />
          <span className="ml-[40px] w-[358px]">Filter by Commodity:</span>
          <Select className="w-[140px]" />
          <span className="ml-[40px] w-[328px]">Filter by Company:</span>
          <Select className="w-[144px]" />
        </div>

        <section className="relative mt-[45px] h-[1200px] overflow-hidden">
          <WorldMap />
          {MARKERS.map(([x, y, c], i) => (
            <div
              key={i}
              className="absolute h-[50px] w-[50px] rounded-full border-4 border-white shadow-[0_4px_8px_rgba(0,0,0,0.35)]"
              style={{ left: x - 161, top: y - 733, backgroundColor: c }}
            />
          ))}
          <div className="absolute top-[20px] left-[20px] w-[68px] rounded-[8px] border-4 border-black/20 bg-clip-padding">
            <div className="flex h-[60px] items-center justify-center rounded-t-[4px] border-b-2 border-[#ccc] bg-white">
              <svg viewBox="0 0 26 26" className="mt-[9px] ml-[2px] h-[26px] w-[26px]">
                <path d="M13 1V25M1 13H25" stroke="#000" strokeWidth="4" />
              </svg>
            </div>
            <div className="flex h-[60px] items-center justify-center rounded-b-[4px] bg-white">
              <svg viewBox="0 0 26 26" className="mt-[8px] ml-[2px] h-[26px] w-[26px]">
                <path d="M1 13H25" stroke="#000" strokeWidth="4.500" />
              </svg>
            </div>
          </div>
          <div className="absolute top-[20px] right-[20px] h-[284px] w-[236px] rounded-[16px] bg-white px-[30px] pt-[16px] text-[28px] leading-[32px] font-bold text-[#212529] shadow-[0_2px_16px_rgba(0,0,0,0.25)]">
            <div className="tracking-[0.8px]">Commodities</div>
            <div className="mt-[18px] flex flex-col gap-[18px]">
              {LEGEND.map(([n, c]) => (
                <div key={n} className="flex h-[32px] items-center gap-[16px] tracking-[0.8px]">
                  <span className="mt-[4px] h-[32px] w-[32px] rounded-full border-2 border-[#ccc]" style={{ backgroundColor: c }} />
                  <span className="-mt-[2px]">{n}</span>
                </div>
              ))}
            </div>
          </div>
          <Popup />
          <div className="absolute right-0 bottom-0 flex h-[33px] w-[408px] items-center justify-center bg-white/70 pr-[1px] font-['Liberation_Sans'] text-[22px] tracking-[0.13px] whitespace-pre text-[#333]">
            <span className="text-[#0078a8]">Leaflet</span> | © OpenStreetMap contributors
          </div>
        </section>
      </main>

      <footer className="mt-[100px] h-[864px] bg-[#0b7880] font-['Inter'] text-[31px] font-light text-white">
        <div className="flex h-[703px] border-b border-white/10 pt-[93px] pl-[72px]">
          <div className="w-[695px]">
            <h2 className="h-[48px] font-['Lato'] text-[40px] leading-[48px] font-bold tracking-[0.8px] text-[#c0f03c]">About Us</h2>
            <p className="mt-[45px] leading-[48px] tracking-[0.46px] whitespace-nowrap">
              <span className="tracking-[0.72px]">AidEnvironment is a not-for-profit</span>
              <br />
              sustainability research, strategy and
              <br />
              <span className="tracking-[0.72px]">implementation organisation working to</span>
              <br />
              achieve transformative sector change.
            </p>
          </div>
          <div className="w-[695px]">
            <h2 className="h-[48px] font-['Lato'] text-[40px] leading-[48px] font-bold tracking-[-0.1px] text-[#c0f03c]">Quick Links</h2>
            <ul className="mt-[45px] flex flex-col gap-[20px] leading-[48px] tracking-[0.55px]">
              {QUICK_LINKS.map((l) => (
                <li key={l}>{l}</li>
              ))}
            </ul>
          </div>
          <div className="w-[695px]">
            <h2 className="h-[48px] font-['Lato'] text-[40px] leading-[48px] font-bold tracking-[0.8px] text-[#c0f03c]">Contact Us</h2>
            <ul className="mt-[45px] flex flex-col gap-[20px] leading-[48px] tracking-[0.4px] whitespace-nowrap">
              <li className="flex items-center gap-[12px] tracking-[0.5px]">
                <FaLocationDot className="-mt-[2px] h-[32px] w-[24px]" />
                Barentszplein 7, 1013 NJ Amsterdam
              </li>
              <li className="flex items-center gap-[10px]">
                <FaEnvelope className="-mt-[4px] h-[32px] w-[32px]" />
                info@aidenvironment.org
              </li>
              <li className="flex items-center gap-[10px]">
                <FaGlobe className="-mt-[2px] h-[32px] w-[32px]" />
                aidenvironment.org
              </li>
            </ul>
          </div>
          <div className="w-[600px]">
            <h2 className="h-[48px] font-['Lato'] text-[40px] leading-[48px] font-bold tracking-[0.4px] text-[#c0f03c]">Follow Us</h2>
            <div className="mt-[45px] flex gap-[30px]">
              {[FaLinkedin, FaTwitter, FaFacebook].map((Icon, i) => (
                <span key={i} className="flex h-[80px] w-[80px] items-center justify-center rounded-full bg-[#1f868c]">
                  <Icon className="h-[32px] w-[32px]" />
                </span>
              ))}
            </div>
            <div className="mt-[300px] flex">
              <Emblem className="h-[76px] w-[76px]" ring="#ffe000" width="2.6" />
              <div className="-mt-[2px] ml-[22px] font-['Lato'] text-[49px] leading-[31px] font-black tracking-[2px]">
                <div className="pt-[6px]">aıd</div>
                <div>envıronment</div>
              </div>
            </div>
          </div>
        </div>
        <div className="pt-[41px] text-center leading-[48px] tracking-[0.25px]">© 2025 AidEnvironment.</div>
      </footer>
    </div>
  );
}
